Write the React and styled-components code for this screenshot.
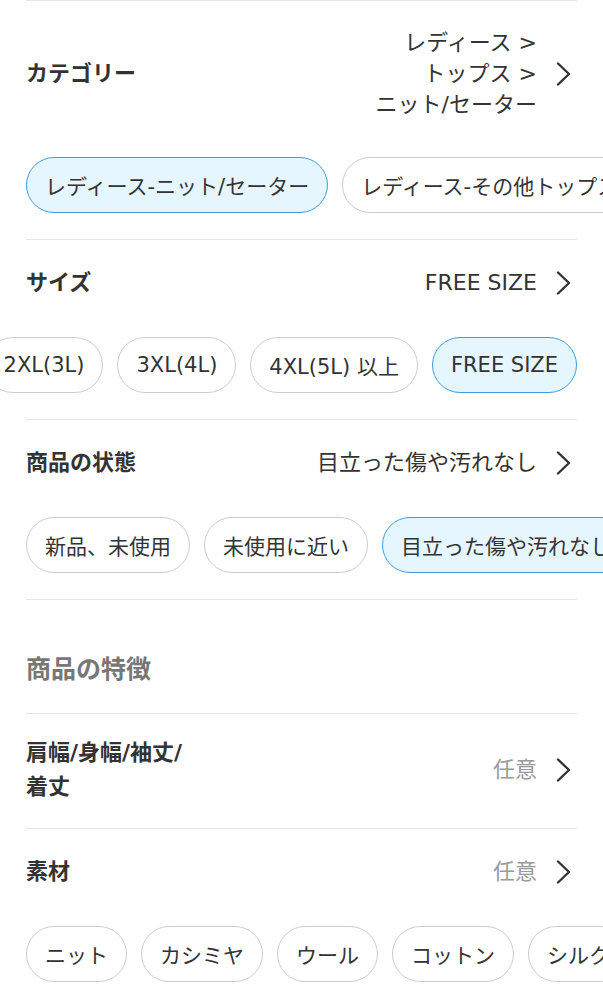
import React from "react";
import styled, { createGlobalStyle } from "styled-components";

const Global = createGlobalStyle`
  html, body { margin: 0; padding: 0; background: #fff; }
  body {
    font-family: "DejaVu Sans", "Noto Sans CJK JP", sans-serif;
    color: #333;
    -webkit-font-smoothing: antialiased;
  }
`;

const Page = styled.div`
  width: 603px;
  padding: 0 26px;
  box-sizing: border-box;
  overflow: hidden;
`;

const Section = styled.section`
  border-top: 1px solid #e6e6e6;
  padding-bottom: ${(p) => p.$pb ?? 26}px;
`;

const Header = styled.div`
  display: flex;
  align-items: center;
  justify-content: space-between;
  gap: 16px;
  padding-top: ${(p) => p.$pt ?? 26}px;
  line-height: 34px;
`;

const Label = styled.div`
  font-size: 22px;
  font-weight: 700;
  color: #333;
  flex-shrink: 0;
`;

const Title = styled.div`
  font-size: 25px;
  font-weight: 700;
  color: #777;
  padding-top: 53px;
  line-height: 34px;
`;

const ValueGroup = styled.div`
  display: flex;
  align-items: center;
  gap: 19px;
  padding-right: 6px;
`;

const Value = styled.div`
  font-size: 22px;
  text-align: right;
  color: ${(p) => (p.$muted ? "#9a9a9a" : "#333")};
  line-height: ${(p) => p.$lh || "34px"};
`;

const ChipScroller = styled.div`
  display: flex;
  gap: 14px;
  margin: 37px -26px 0;
  padding: 0 26px;
  overflow: hidden;
  justify-content: ${(p) => (p.$end ? "flex-end" : "flex-start")};
`;

const Chip = styled.div`
  flex-shrink: 0;
  display: inline-flex;
  align-items: center;
  height: 56px;
  box-sizing: border-box;
  padding: 0 18px;
  border-radius: 28px;
  white-space: nowrap;
  font-size: 21px;
  color: #333;
  border: 1.5px solid ${(p) => (p.$active ? "#3f9ddf" : "#cccccc")};
  background: ${(p) => (p.$active ? "#e6f6fe" : "#fff")};
`;

const Chevron = () => (
  <svg width="15" height="24" viewBox="0 0 15 24" fill="none">
    <polyline
      points="2,1.5 13,12 2,22.5"
      stroke="#333"
      strokeWidth="2.4"
      strokeLinecap="round"
      strokeLinejoin="round"
    />
  </svg>
);

const Row = ({ label, value, muted, lh, pt }) => (
  <Header $pt={pt}>
    <Label>{label}</Label>
    <ValueGroup>
      {value && (
        <Value $muted={muted} $lh={lh}>
          {value}
        </Value>
      )}
      <Chevron />
    </ValueGroup>
  </Header>
);

const Chips = ({ items, active, end }) => (
  <ChipScroller $end={end}>
    {items.map((t) => (
      <Chip key={t} $active={t === active}>
        {t}
      </Chip>
    ))}
  </ChipScroller>
);

export default function App() {
  return (
    <>
      <Global />
      <Page>
        <Section>
          <Row
            label="カテゴリー"
            lh="31px"
            value={
              <>
                レディース &gt;
                <br />
                トップス &gt;
                <br />
                ニット/セーター
              </>
            }
          />
          <Chips
            items={["レディース-ニット/セーター", "レディース-その他トップス"]}
            active="レディース-ニット/セーター"
          />
        </Section>

        <Section>
          <Row label="サイズ" value="FREE SIZE" />
          <Chips
            end
            items={[
              "XS(SS)",
              "S",
              "M",
              "L",
              "XL(LL)",
              "2XL(3L)",
              "3XL(4L)",
              "4XL(5L) 以上",
              "FREE SIZE",
            ]}
            active="FREE SIZE"
          />
        </Section>

        <Section>
          <Row label="商品の状態" value="目立った傷や汚れなし" />
          <Chips
            items={["新品、未使用", "未使用に近い", "目立った傷や汚れなし", "やや傷や汚れあり"]}
            active="目立った傷や汚れなし"
          />
        </Section>

        <Section>
          <Title>商品の特徴</Title>
        </Section>

        <Section $pb={24}>
          <Row
            pt={22}
            label={
              <>
                肩幅/身幅/袖丈/
                <br />
                着丈
              </>
            }
            value="任意"
            muted
          />
        </Section>

        <Section>
          <Row label="素材" value="任意" muted />
          <Chips items={["ニット", "カシミヤ", "ウール", "コットン", "シルク", "リネン"]} />
        </Section>
      </Page>
    </>
  );
}
